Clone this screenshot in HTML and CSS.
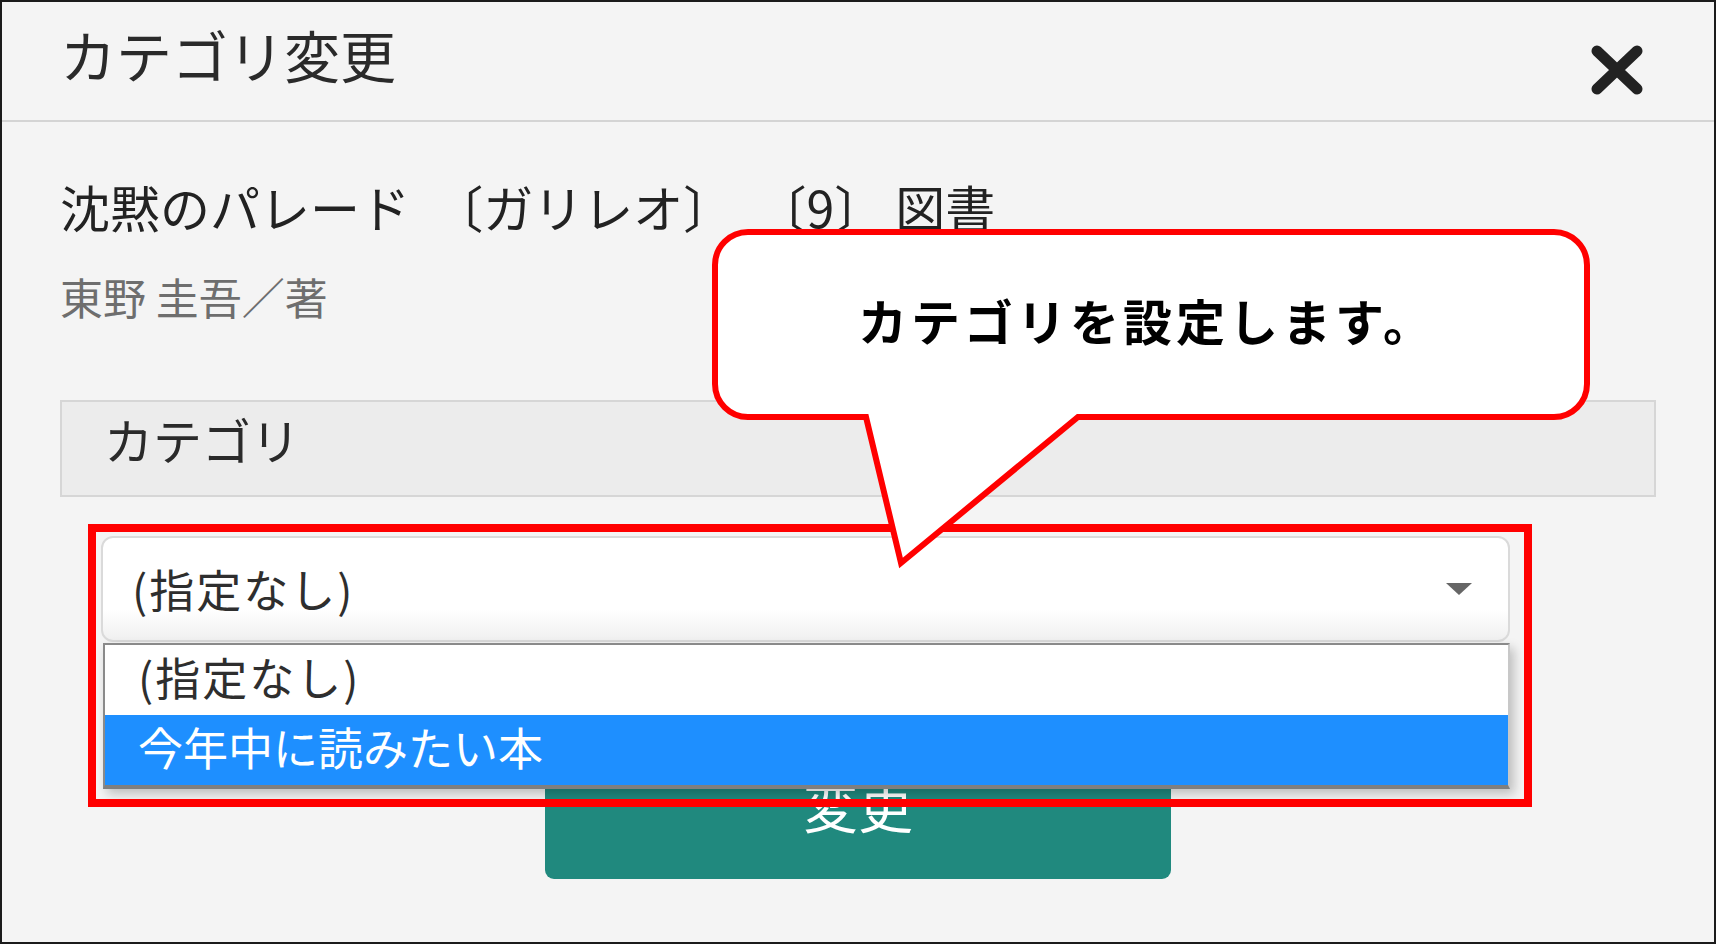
FILE: index.html
```html
<!DOCTYPE html>
<html lang="ja">
<head>
<meta charset="utf-8">
<title>カテゴリ変更</title>
<link rel="stylesheet" href="styles.css">
</head>
<body>
<div class="frame">
  <header class="header">
    <h1 class="title">カテゴリ変更</h1>
    <button class="close" type="button" aria-label="閉じる">
      <svg width="52" height="50" viewBox="0 0 52 50"><path d="M6 6 L46 44 M46 6 L6 44" stroke="#222" stroke-width="11" stroke-linecap="round" fill="none"/></svg>
    </button>
  </header>
  <main class="content">
    <p class="book-title">沈黙のパレード <span class="sp"></span>〔ガリレオ〕 <span class="sp"></span>〔9〕 図書</p>
    <p class="author">東野 圭吾／著</p>
    <div class="field-label">カテゴリ</div>
    <div class="select">
      <span class="select-value">(指定なし)</span>
      <span class="select-arrow"></span>
      <ul class="dropdown">
        <li class="option">(指定なし)</li>
        <li class="option selected">今年中に読みたい本</li>
      </ul>
    </div>
    <button class="submit" type="button">変更</button>
  </main>
  <div class="highlight"></div>
  <div class="callout">
    <svg class="callout-shape" width="900" height="360" viewBox="0 0 900 360">
      <path d="M48,12 H854 A33,33 0 0 1 887,45 V164 A33,33 0 0 1 854,197 H378 L201,343 L166,197 H48 A33,33 0 0 1 15,164 V45 A33,33 0 0 1 48,12 Z" fill="#fff" stroke="#ff0000" stroke-width="6" stroke-linejoin="miter" stroke-miterlimit="10"/>
    </svg>
    <p class="callout-text">カテゴリを設定します。</p>
  </div>
</div>
</body>
</html>
```

FILE: styles.css
```css
* { box-sizing: border-box; }
html, body { margin: 0; padding: 0; }
body {
  width: 1716px;
  height: 944px;
  overflow: hidden;
  font-family: "Noto Sans CJK JP", "Noto Sans", sans-serif;
  background: #f4f4f4;
}
.frame {
  position: relative;
  width: 1716px;
  height: 944px;
  border: 2px solid #1b1b1b;
  background: #f4f4f4;
  overflow: hidden;
}
.header {
  height: 120px;
  border-bottom: 2px solid #d4d4d4;
  display: flex;
  align-items: flex-start;
  justify-content: space-between;
  padding: 0 71px 0 58px;
}
.title {
  margin: 24px 0 0;
  font-size: 56px;
  line-height: 1;
  font-weight: 400;
  color: #2a2a2a;
}
.close {
  margin-top: 43px;
  padding: 0;
  border: 0;
  background: none;
  width: 52px;
  height: 50px;
  display: block;
}
.close svg { display: block; }
.content {
  padding: 0 58px;
  display: flex;
  flex-direction: column;
  align-items: flex-start;
}
.book-title {
  margin: 59px 0 0;
  font-size: 50px;
  line-height: 1;
  color: #222;
  white-space: nowrap;
}
.sp { display: inline-block; width: 12px; }
.author {
  margin: 44px 0 0;
  font-size: 43px;
  line-height: 1;
  color: #6e6e6e;
}
.field-label {
  margin-top: 82px;
  align-self: stretch;
  height: 97px;
  border: 2px solid #d6d6d6;
  background: #ececec;
  padding: 12px 0 0 42px;
  font-size: 49px;
  line-height: 1;
  color: #2a2a2a;
}
.select {
  position: relative;
  margin: 39px 0 0 41px;
  width: 1409px;
  height: 106px;
  border: 2px solid #dadada;
  border-radius: 12px;
  background: linear-gradient(#ffffff 0%, #ffffff 70%, #f0f0f0 100%);
  display: flex;
  align-items: center;
  justify-content: space-between;
  padding: 0 36px 2px 29px;
}
.select-value {
  font-size: 45px;
  line-height: 1;
  color: #2e2e2e;
  letter-spacing: 2px;
}
.select-arrow {
  width: 0;
  height: 0;
  border-left: 13px solid transparent;
  border-right: 13px solid transparent;
  border-top: 12px solid #666;
  margin-top: 2px;
}
.dropdown {
  position: absolute;
  left: 0;
  top: 105px;
  width: 1407px;
  margin: 0;
  padding: 0;
  list-style: none;
  background: #fff;
  border: 2px solid #8a8a8a;
  border-right-color: #c8c8c8;
  border-bottom: 4px solid #7f7f7f;
  box-shadow: 4px 5px 10px rgba(0, 0, 0, 0.22);
  z-index: 2;
}
.option {
  height: 70px;
  display: flex;
  align-items: center;
  padding: 0 0 8px 33px;
  font-size: 45px;
  line-height: 1;
  color: #2e2e2e;
}
.option:first-child { letter-spacing: 2px; }
.option.selected {
  background: #1e8fff;
  color: #fff;
}
.submit {
  margin: 109px auto 0;
  align-self: center;
  width: 626px;
  height: 128px;
  border: 0;
  border-radius: 9px;
  background: #20897e;
  color: #fff;
  font-family: inherit;
  font-size: 55px;
  line-height: 1;
  padding: 0 0 22px;
}
.highlight {
  position: absolute;
  left: 86px;
  top: 522px;
  width: 1444px;
  height: 283px;
  border: 8px solid #ff0000;
  z-index: 3;
}
.callout {
  position: absolute;
  left: 698px;
  top: 218px;
  width: 900px;
  height: 360px;
  z-index: 4;
}
.callout-shape {
  position: absolute;
  left: 0;
  top: 0;
}
.callout-text {
  position: absolute;
  left: 15px;
  top: 12px;
  width: 872px;
  height: 185px;
  margin: 0;
  display: flex;
  align-items: center;
  justify-content: center;
  padding: 0 8px 10px 0;
  font-size: 49px;
  line-height: 1;
  font-weight: 700;
  letter-spacing: 4px;
  color: #000;
}
```
